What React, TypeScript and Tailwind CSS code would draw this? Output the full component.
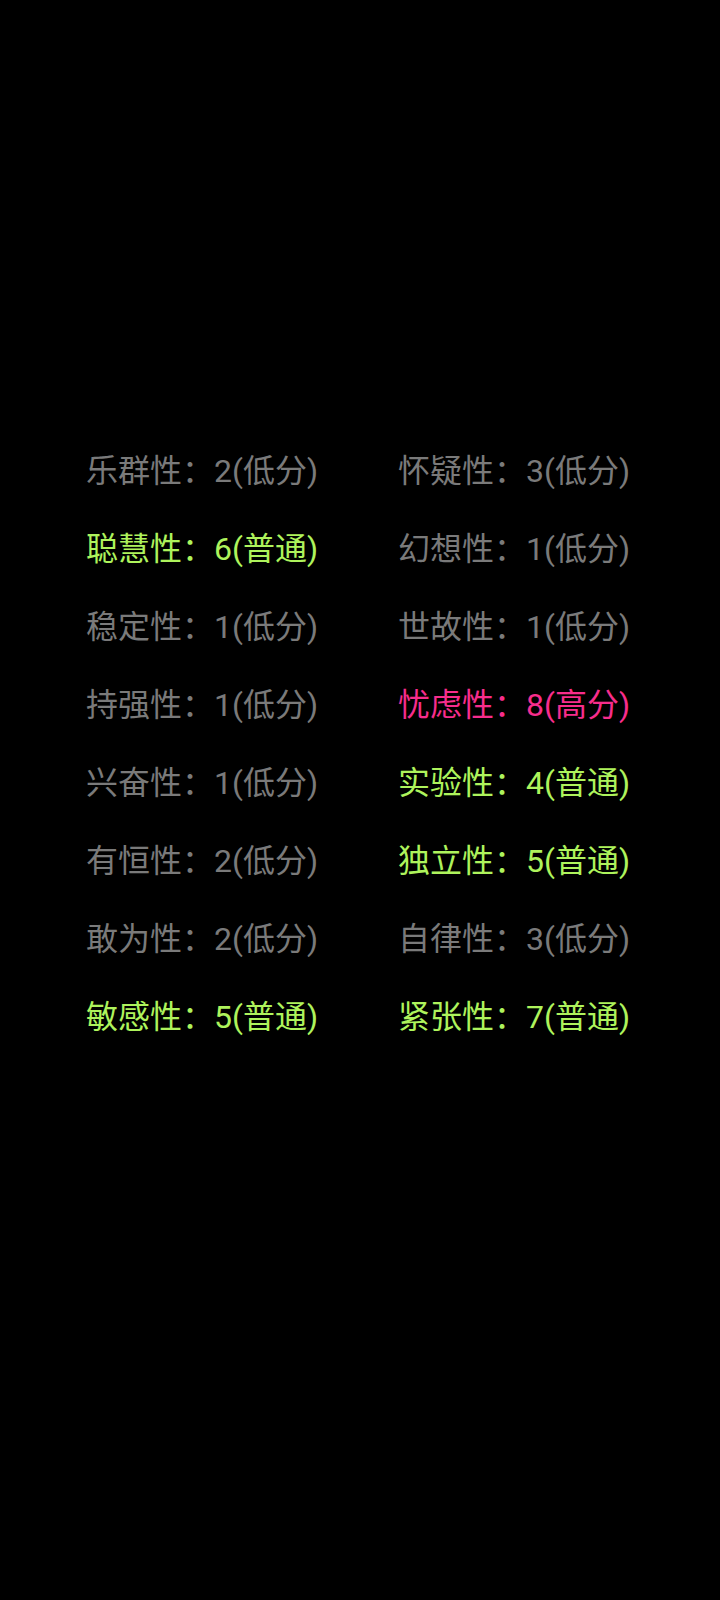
const traits: [string, number, string][] = [
  ["乐群性", 2, "低分"],
  ["怀疑性", 3, "低分"],
  ["聪慧性", 6, "普通"],
  ["幻想性", 1, "低分"],
  ["稳定性", 1, "低分"],
  ["世故性", 1, "低分"],
  ["持强性", 1, "低分"],
  ["忧虑性", 8, "高分"],
  ["兴奋性", 1, "低分"],
  ["实验性", 4, "普通"],
  ["有恒性", 2, "低分"],
  ["独立性", 5, "普通"],
  ["敢为性", 2, "低分"],
  ["自律性", 3, "低分"],
  ["敏感性", 5, "普通"],
  ["紧张性", 7, "普通"],
];

function levelColor(level: string) {
  if (level === "高分") return "text-[#f72d8c]";
  if (level === "普通") return "text-[#aef35c]";
  return "text-[#7a7a7a]";
}

export default function App() {
  return (
    <main className="h-[1600px] w-[720px] bg-black font-['Roboto','Noto_Sans_CJK_SC',sans-serif]">
      <div className="grid grid-cols-[312px_1fr] pl-[86px] pt-[432px]">
        {traits.map(([name, score, level]) => (
          <div key={name} className={`h-[78px] text-[32px] leading-[78px] whitespace-nowrap ${levelColor(level)}`}>
            {name}：{score}({level})
          </div>
        ))}
      </div>
    </main>
  );
}
